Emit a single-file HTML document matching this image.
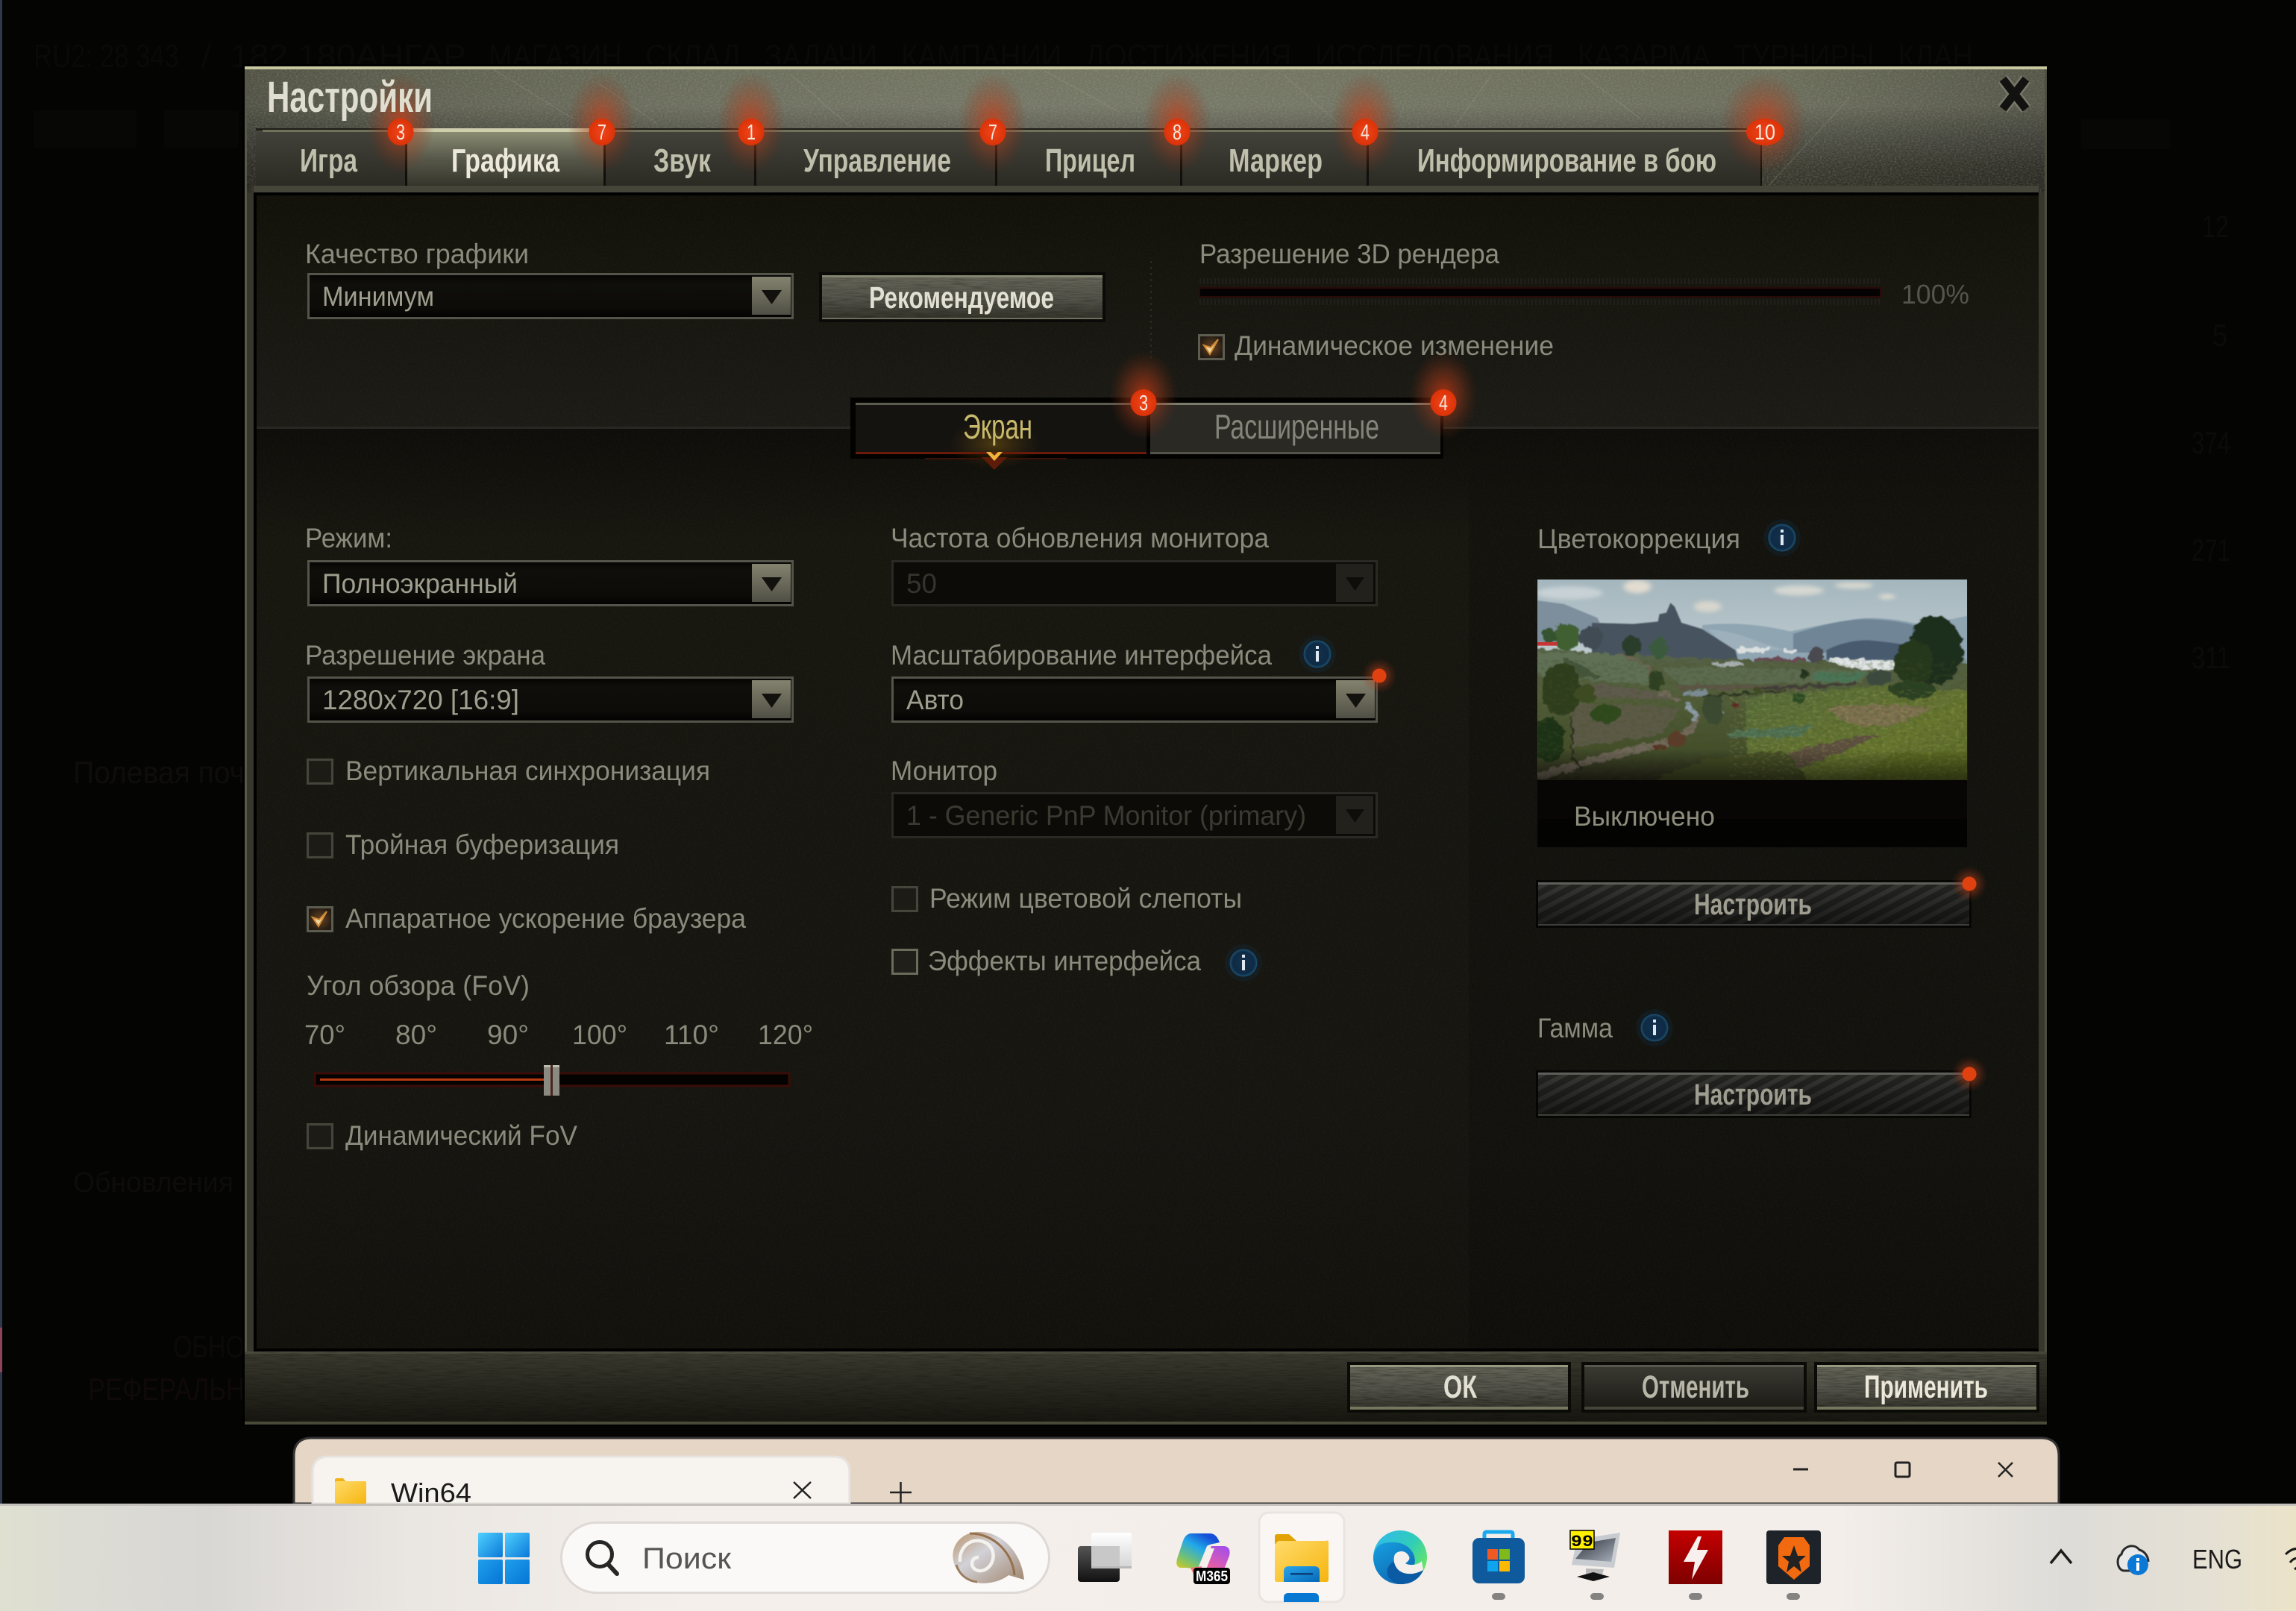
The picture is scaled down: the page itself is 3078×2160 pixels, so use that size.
<!DOCTYPE html>
<html lang="ru"><head><meta charset="utf-8"><title>Настройки</title>
<style>
html,body{margin:0;padding:0;background:#040403;width:3078px;height:2160px;overflow:hidden}
svg{display:block}
text{font-family:"Liberation Sans Narrow","Liberation Sans",sans-serif;white-space:pre}
.l{font-size:37px;fill:#8b8a7c}
.lb{font-size:37px;fill:#a09e8e}
.t{font-size:44px;font-weight:700;fill:#c0bfac}
.b{font-weight:700}
.bd{font-size:29px;fill:#f6e8dc}
.f{font-size:44px;fill:#090908}
</style></head><body>
<svg xmlns="http://www.w3.org/2000/svg" width="3078" height="2160" viewBox="0 0 3078 2160">
<defs>
<linearGradient id="hd" x1="0" y1="0" x2="0" y2="1"><stop offset="0" stop-color="#6e705c"/><stop offset=".3" stop-color="#707260"/><stop offset=".55" stop-color="#54554a"/><stop offset=".8" stop-color="#3e3e33"/><stop offset="1" stop-color="#35352b"/></linearGradient>
<linearGradient id="hs" x1="0" y1="0" x2="1" y2="0"><stop offset="0" stop-color="#000" stop-opacity=".28"/><stop offset=".12" stop-color="#000" stop-opacity=".12"/><stop offset=".55" stop-color="#fff" stop-opacity=".04"/><stop offset=".85" stop-color="#000" stop-opacity=".03"/><stop offset="1" stop-color="#000" stop-opacity=".25"/></linearGradient>
<linearGradient id="tb" x1="0" y1="0" x2="0" y2="1"><stop offset="0" stop-color="#42423a"/><stop offset="1" stop-color="#2b2a23"/></linearGradient>
<linearGradient id="ta" x1="0" y1="0" x2="0" y2="1"><stop offset="0" stop-color="#8b8d73"/><stop offset=".5" stop-color="#58584a"/><stop offset="1" stop-color="#35352b"/></linearGradient>
<linearGradient id="pn" x1="0" y1="0" x2="0" y2="1"><stop offset="0" stop-color="#121109"/><stop offset="1" stop-color="#1c1b16"/></linearGradient>
<linearGradient id="pn2" x1="0" y1="0" x2="0" y2="1"><stop offset="0" stop-color="#0e0d09"/><stop offset=".12" stop-color="#17160f"/><stop offset=".75" stop-color="#161510"/><stop offset="1" stop-color="#12110c"/></linearGradient>
<linearGradient id="rc" x1="0" y1="0" x2="0" y2="1"><stop offset="0" stop-color="#000" stop-opacity="0"/><stop offset=".1" stop-color="#000" stop-opacity=".16"/><stop offset="1" stop-color="#000" stop-opacity=".16"/></linearGradient>
<linearGradient id="bt" x1="0" y1="0" x2="0" y2="1"><stop offset="0" stop-color="#3b3b30"/><stop offset="1" stop-color="#16150f"/></linearGradient>
<linearGradient id="btn" x1="0" y1="0" x2="0" y2="1"><stop offset="0" stop-color="#66665a"/><stop offset=".55" stop-color="#53534a"/><stop offset="1" stop-color="#34332a"/></linearGradient>
<linearGradient id="btd" x1="0" y1="0" x2="0" y2="1"><stop offset="0" stop-color="#3b3a33"/><stop offset="1" stop-color="#1b1a15"/></linearGradient>
<linearGradient id="ar" x1="0" y1="0" x2="0" y2="1"><stop offset="0" stop-color="#84836f"/><stop offset="1" stop-color="#504f45"/></linearGradient>
<linearGradient id="dd" x1="0" y1="0" x2="0" y2="1"><stop offset="0" stop-color="#040302"/><stop offset=".2" stop-color="#0f0e0a"/><stop offset=".75" stop-color="#0d0c08"/><stop offset="1" stop-color="#020201"/></linearGradient>
<radialGradient id="gl"><stop offset="0" stop-color="#d83a12" stop-opacity=".75"/><stop offset=".55" stop-color="#a83c1a" stop-opacity=".36"/><stop offset="1" stop-color="#7a2a12" stop-opacity="0"/></radialGradient>
<radialGradient id="bdg"><stop offset="0" stop-color="#f0451a"/><stop offset="1" stop-color="#dc3208"/></radialGradient>
<radialGradient id="ib"><stop offset="0" stop-color="#15324e"/><stop offset=".78" stop-color="#0e2a44"/><stop offset="1" stop-color="#1d5172"/></radialGradient>
<radialGradient id="ekg"><stop offset="0" stop-color="#7a5a12" stop-opacity=".55"/><stop offset="1" stop-color="#5a3a0a" stop-opacity="0"/></radialGradient>
<pattern id="hatch" width="14" height="14" patternUnits="userSpaceOnUse" patternTransform="rotate(-28)"><rect width="14" height="14" fill="#262623"/><rect width="14" height="6" fill="#3a3a37"/></pattern>
<linearGradient id="hv" x1="0" y1="0" x2="0" y2="1"><stop offset="0" stop-color="#000" stop-opacity=".05"/><stop offset="1" stop-color="#000" stop-opacity=".55"/></linearGradient>
<linearGradient id="tv" x1="0" y1="0" x2="0" y2="1"><stop offset="0" stop-color="#555"/><stop offset="1" stop-color="#111"/></linearGradient>
<linearGradient id="tv2" x1="0" y1="0" x2="0" y2="1"><stop offset="0" stop-color="#fff"/><stop offset="1" stop-color="#d4d4d4"/></linearGradient>
<radialGradient id="chk"><stop offset="0" stop-color="#6a4420"/><stop offset="1" stop-color="#241c14"/></radialGradient>
<linearGradient id="tk" x1="0" y1="0" x2="1" y2="0"><stop offset="0" stop-color="#dfe0cf"/><stop offset=".03" stop-color="#dcdcd4"/><stop offset=".09" stop-color="#d9d7d4"/><stop offset=".18" stop-color="#eae6e2"/><stop offset=".3" stop-color="#f4efea"/><stop offset=".8" stop-color="#f3eee9"/><stop offset=".9" stop-color="#dedcd8"/><stop offset=".96" stop-color="#e4e0d4"/><stop offset="1" stop-color="#ebe3c8"/></linearGradient>
<linearGradient id="win" x1="0" y1="0" x2="1" y2="1"><stop offset="0" stop-color="#4fd0ff"/><stop offset="1" stop-color="#0a78d8"/></linearGradient>
<linearGradient id="win2" x1="0" y1="0" x2="1" y2="1"><stop offset="0" stop-color="#1f9fec"/><stop offset="1" stop-color="#0575d6"/></linearGradient>
<linearGradient id="fo" x1="0" y1="0" x2="1" y2="1"><stop offset="0" stop-color="#ffdb6a"/><stop offset="1" stop-color="#f6b50f"/></linearGradient>
<linearGradient id="fd" x1="0" y1="0" x2="1" y2="1"><stop offset="0" stop-color="#2aa6ea"/><stop offset="1" stop-color="#0568b8"/></linearGradient>
<linearGradient id="cp1" x1="0" y1="1" x2=".6" y2="0"><stop offset="0" stop-color="#ffc800"/><stop offset=".35" stop-color="#7cc36a"/><stop offset=".7" stop-color="#22a9e8"/><stop offset="1" stop-color="#1650d8"/></linearGradient>
<linearGradient id="cp2" x1=".2" y1="1" x2=".8" y2="0"><stop offset="0" stop-color="#ff8c52"/><stop offset=".45" stop-color="#e85ea4"/><stop offset="1" stop-color="#a64fe8"/></linearGradient>
<linearGradient id="e1" x1="0" y1="0" x2="1" y2=".7"><stop offset="0" stop-color="#2fb8f0"/><stop offset=".6" stop-color="#30cdb8"/><stop offset="1" stop-color="#6de85c"/></linearGradient>
<linearGradient id="e2" x1="0" y1="0" x2=".7" y2="1"><stop offset="0" stop-color="#18a0e0"/><stop offset="1" stop-color="#0b62b0"/></linearGradient>
<linearGradient id="rd" x1="0" y1="0" x2="0" y2="1"><stop offset="0" stop-color="#c40000"/><stop offset="1" stop-color="#7e0000"/></linearGradient>
<linearGradient id="mn" x1="0" y1="0" x2="1" y2="1"><stop offset="0" stop-color="#2c3038"/><stop offset="1" stop-color="#a8b0bc"/></linearGradient>
<linearGradient id="sky" x1="0" y1="0" x2="0" y2="1"><stop offset="0" stop-color="#a4b6bd"/><stop offset=".6" stop-color="#cbd5d8"/><stop offset="1" stop-color="#b0c2cc"/></linearGradient>
<linearGradient id="gr" x1="0" y1="0" x2="0" y2="1"><stop offset="0" stop-color="#566348"/><stop offset=".4" stop-color="#515c38"/><stop offset=".75" stop-color="#434e2a"/><stop offset="1" stop-color="#332f22"/></linearGradient>
<linearGradient id="gr2" x1="0" y1="0" x2="1" y2="1"><stop offset="0" stop-color="#556a3c"/><stop offset=".6" stop-color="#66742e"/><stop offset="1" stop-color="#59662a"/></linearGradient>
<linearGradient id="vig" x1="0" y1="0" x2="0" y2="1"><stop offset="0" stop-color="#000" stop-opacity="0"/><stop offset="1" stop-color="#000" stop-opacity=".55"/></linearGradient>
<linearGradient id="shell" x1="0" y1="0" x2="1" y2="1"><stop offset="0" stop-color="#b8926a"/><stop offset=".4" stop-color="#d2d2d8"/><stop offset="1" stop-color="#a0846c"/></linearGradient>
<filter id="nz" x="0" y="0" width="100%" height="100%"><feTurbulence type="fractalNoise" baseFrequency=".35 .55" numOctaves="2" seed="4"/><feColorMatrix values="0 0 0 0 .5  0 0 0 0 .5  0 0 0 0 .45  0 0 0 1.4 -.55"/></filter>
<filter id="nz2" x="0" y="0" width="100%" height="100%"><feTurbulence type="fractalNoise" baseFrequency=".04 .7" numOctaves="3" seed="8"/><feColorMatrix values="0 0 0 0 0  0 0 0 0 0  0 0 0 0 0  0 0 0 1.6 -.65"/></filter>
<filter id="rough" x="-2%" y="-2%" width="104%" height="104%"><feTurbulence type="fractalNoise" baseFrequency=".035" numOctaves="3" seed="3"/><feDisplacementMap in="SourceGraphic" scale="30" xChannelSelector="R" yChannelSelector="G"/></filter>
<filter id="sp" x="0" y="0" width="100%" height="100%"><feTurbulence type="fractalNoise" baseFrequency=".05 .07" numOctaves="3" seed="11"/><feColorMatrix values="0 0 0 0 .06  0 0 0 0 .08  0 0 0 0 .02  0 0 0 3.4 -1.5"/></filter>
<filter id="sy" x="0" y="0" width="100%" height="100%"><feTurbulence type="fractalNoise" baseFrequency=".06 .09" numOctaves="3" seed="21"/><feColorMatrix values="0 0 0 0 .72  0 0 0 0 .68  0 0 0 0 .22  0 0 0 3.6 -1.8"/></filter>
<filter id="bl"><feGaussianBlur stdDeviation="2"/></filter>
<filter id="bl8"><feGaussianBlur stdDeviation="9"/></filter>
<clipPath id="lc"><rect x="3" y="6" width="1557" height="810"/></clipPath>
<g id="ddn"><rect x="1.5" y="1.5" width="649" height="59" fill="url(#dd)" stroke="#55544a" stroke-width="3"/><rect x="596" y="5" width="52" height="51" fill="url(#ar)"/><path d="M609 23H636L622.500 42Z" fill="#12110d"/></g>
<g id="ddd"><rect x="1.5" y="1.500" width="649" height="59" fill="#0c0b08" stroke="#2a2923" stroke-width="3"/><rect x="596" y="5" width="50" height="51" fill="#22211c"/><path d="M609 23H634L621.500 41Z" fill="#0e0d0a"/></g>
<g id="cb"><rect x="1.500" y="1.500" width="33" height="32" fill="#201f1a" stroke="#46453b" stroke-width="3"/><rect x="4" y="4" width="28" height="27" fill="#1c1b16"/></g>
<g id="cc"><rect x="1.500" y="1.500" width="33" height="32" fill="url(#chk)" stroke="#5d5c50" stroke-width="3"/><path d="M8 15L16 27L27 7L17 18Z" fill="#f0d8a0" stroke="#d08a38" stroke-width="2"/></g>
<g id="inf"><circle r="25" fill="#0f3550" opacity=".25"/><circle r="18.500" fill="url(#ib)"/><rect x="-2" y="-4" width="4" height="14" fill="#dfe9ef"/><rect x="-2" y="-11" width="4" height="4" fill="#dfe9ef"/></g>
<g id="dot"><circle r="24" fill="url(#gl)"/><circle r="9.500" fill="#df4210"/></g>
</defs>

<!-- Background -->
<rect width="3078" height="2160" fill="#040403"/>
<rect x="0" y="0" width="3" height="2016" fill="#30384e"/>
<rect x="0" y="1780" width="3" height="60" fill="#8c4458"/>
<g>
<text class="f" x="45" y="90" textLength="195" lengthAdjust="spacingAndGlyphs">RU2: 28 343</text>
<text class="f" x="270" y="90" textLength="355" lengthAdjust="spacingAndGlyphs">/  182 180АНГАР</text>
<text class="f" x="655" y="90" textLength="1990" lengthAdjust="spacingAndGlyphs">МАГАЗИН   СКЛАД   ЗАДАЧИ   КАМПАНИИ   ДОСТИЖЕНИЯ   ИССЛЕДОВАНИЯ   КАЗАРМА   ТУРНИРЫ   КЛАН</text>
<text x="98" y="1050" font-size="42" fill="#0e0d0b" textLength="230" lengthAdjust="spacingAndGlyphs">Полевая поч</text>
<text x="98" y="1598" font-size="38" fill="#0d0c0a" textLength="215" lengthAdjust="spacingAndGlyphs">Обновления</text>
<text x="232" y="1820" font-size="42" fill="#0b0a08" textLength="96" lengthAdjust="spacingAndGlyphs">ОБНО</text>
<text x="118" y="1877" font-size="42" fill="#0f0908" textLength="210" lengthAdjust="spacingAndGlyphs">РЕФЕРАЛЬН</text>
<text x="2952" y="318" font-size="42" fill="#0b0b09" textLength="36" lengthAdjust="spacingAndGlyphs">12</text>
<text x="2966" y="464" font-size="42" fill="#0b0b09" textLength="20" lengthAdjust="spacingAndGlyphs">5</text>
<text x="2938" y="608" font-size="42" fill="#0b0b09" textLength="52" lengthAdjust="spacingAndGlyphs">374</text>
<text x="2938" y="752" font-size="42" fill="#0b0b09" textLength="52" lengthAdjust="spacingAndGlyphs">271</text>
<text x="2938" y="896" font-size="42" fill="#0b0b09" textLength="52" lengthAdjust="spacingAndGlyphs">311</text>
</g>
<rect x="45" y="148" width="138" height="50" fill="#070706"/><rect x="220" y="148" width="100" height="50" fill="#070706"/>
<rect x="2790" y="160" width="120" height="40" fill="#070706"/>

<!-- Dialog -->
<rect x="325" y="86" width="2421" height="1826" fill="#000"/>
<rect x="328" y="89" width="2416" height="1821" fill="#2e2e25"/>
<rect x="328" y="92" width="2416" height="166" fill="url(#hd)"/>
<rect x="328" y="92" width="2416" height="166" fill="url(#hs)"/>
<rect x="328" y="92" width="2416" height="166" filter="url(#nz)" opacity=".35"/>
<g stroke="#a8aa90" stroke-width="1.500" opacity=".2" fill="none">
<path d="M660 92L770 160M800 110L880 165M1060 100L1140 170M1400 95L1500 150M2000 100L1950 170M2480 130L2370 250M2120 98L2200 160M1720 100L1800 170"/>
</g>
<rect x="328" y="89" width="2416" height="4" fill="#c8c8a0"/>
<!-- side frames -->
<rect x="328" y="258" width="12" height="1558" fill="#37372c"/>
<rect x="2733" y="258" width="11" height="1558" fill="#37372c"/>
<rect x="328" y="93" width="3" height="1817" fill="#58584a"/>
<rect x="2741" y="93" width="3" height="1817" fill="#4e4e40"/>

<!-- close X -->
<path d="M2685 106L2716 146M2716 106L2685 146" stroke="#77776a" stroke-width="16"/>
<path d="M2685 106L2716 146M2716 106L2685 146" stroke="#121210" stroke-width="11"/>

<!-- Tabs -->
<rect x="343" y="172" width="2018" height="3" fill="#1e1e18"/>
<path d="M343 249V184Q343 176 352 176H2361V249Z" fill="url(#tb)"/>
<rect x="544" y="176" width="266" height="73" fill="url(#ta)"/>
<rect x="352" y="174" width="2009" height="3" fill="#72725c"/>
<rect x="545" y="172" width="262" height="5" fill="#cfcfae"/>
<g fill="#100f0b"><rect x="543" y="176" width="3" height="73"/><rect x="809" y="176" width="3" height="73"/><rect x="1011" y="176" width="3" height="73"/><rect x="1334" y="176" width="3" height="73"/><rect x="1582" y="176" width="3" height="73"/><rect x="1832" y="176" width="3" height="73"/><rect x="2360" y="176" width="2" height="73"/></g>
<rect x="340" y="249" width="2393" height="9" fill="#45453a"/>

<!-- Panel -->
<rect x="340" y="258" width="2393" height="1554" fill="#000"/>
<rect x="344" y="262" width="2389" height="313" fill="url(#pn)"/>
<rect x="344" y="575" width="2389" height="1233" fill="url(#pn2)"/>
<rect x="1969" y="600" width="764" height="1208" fill="url(#rc)"/>
<rect x="344" y="262" width="2389" height="1546" filter="url(#nz)" opacity=".05"/>
<rect x="344" y="572" width="796" height="3" fill="#282722"/><rect x="1935" y="572" width="798" height="3" fill="#282722"/>
<path d="M1543 350V480" stroke="#2a2922" stroke-width="2" stroke-dasharray="3 5"/>

<!-- Glows tabs -->
<g fill="url(#gl)">
<ellipse cx="537" cy="165" rx="46" ry="68"/><ellipse cx="807" cy="165" rx="46" ry="68"/><ellipse cx="1007" cy="165" rx="46" ry="68"/><ellipse cx="1331" cy="165" rx="46" ry="68"/><ellipse cx="1578" cy="165" rx="46" ry="68"/><ellipse cx="1830" cy="165" rx="46" ry="68"/><ellipse cx="2365" cy="165" rx="58" ry="68"/>
</g>
<text x="358" y="150" font-size="58" font-weight="700" fill="#dfded0" textLength="222" lengthAdjust="spacingAndGlyphs">Настройки</text>
<text class="t" x="402" y="230" textLength="77" lengthAdjust="spacingAndGlyphs">Игра</text>
<text class="t" x="605" y="230" textLength="145" lengthAdjust="spacingAndGlyphs" style="fill:#ece9da">Графика</text>
<text class="t" x="876" y="230" textLength="77" lengthAdjust="spacingAndGlyphs">Звук</text>
<text class="t" x="1077" y="230" textLength="198" lengthAdjust="spacingAndGlyphs">Управление</text>
<text class="t" x="1401" y="230" textLength="121" lengthAdjust="spacingAndGlyphs">Прицел</text>
<text class="t" x="1647" y="230" textLength="126" lengthAdjust="spacingAndGlyphs">Маркер</text>
<text class="t" x="1900" y="230" textLength="401" lengthAdjust="spacingAndGlyphs">Информирование в бою</text>
<g fill="url(#bdg)">
<ellipse cx="537" cy="177" rx="17.500" ry="18"/><ellipse cx="807" cy="177" rx="17.500" ry="18"/><ellipse cx="1007" cy="177" rx="17.500" ry="18"/><ellipse cx="1331" cy="177" rx="17.500" ry="18"/><ellipse cx="1578" cy="177" rx="17.500" ry="18"/><ellipse cx="1830" cy="177" rx="17.500" ry="18"/><ellipse cx="2366" cy="177" rx="25" ry="18"/>
</g>
<g class="bd">
<text class="bd" x="531" y="187" textLength="12" lengthAdjust="spacingAndGlyphs">3</text>
<text class="bd" x="801" y="187" textLength="12" lengthAdjust="spacingAndGlyphs">7</text>
<text class="bd" x="1001" y="187" textLength="12" lengthAdjust="spacingAndGlyphs">1</text>
<text class="bd" x="1325" y="187" textLength="12" lengthAdjust="spacingAndGlyphs">7</text>
<text class="bd" x="1572" y="187" textLength="12" lengthAdjust="spacingAndGlyphs">8</text>
<text class="bd" x="1824" y="187" textLength="12" lengthAdjust="spacingAndGlyphs">4</text>
<text class="bd" x="2352" y="187" textLength="28" lengthAdjust="spacingAndGlyphs">10</text>
</g>

<!-- Top row -->
<text class="l" x="409" y="353" textLength="300" lengthAdjust="spacingAndGlyphs">Качество графики</text>
<use href="#ddn" x="412" y="366"/>
<text class="lb" x="432" y="410" textLength="150" lengthAdjust="spacingAndGlyphs">Минимум</text>
<rect x="1098" y="365" width="384" height="67" fill="#0a0a08"/>
<rect x="1102" y="369" width="376" height="59" fill="url(#btn)"/>
<rect x="1102" y="369" width="376" height="59" filter="url(#nz2)" opacity=".35"/>
<rect x="1102" y="369" width="376" height="3" fill="#84846f"/><rect x="1102" y="426" width="376" height="2" fill="#6e6e5c"/>
<text x="1165" y="413" font-size="41" font-weight="700" fill="#e2e0d2" textLength="248" lengthAdjust="spacingAndGlyphs">Рекомендуемое</text>

<text class="l" x="1608" y="353" textLength="402" lengthAdjust="spacingAndGlyphs">Разрешение 3D рендера</text>
<path d="M1608 377H2521M1608 405H2521" stroke="#201f1a" stroke-width="8" stroke-dasharray="2 3"/>
<rect x="1608" y="386" width="913" height="12" fill="#040202" stroke="#2a0a08" stroke-width="2"/>
<text x="2549" y="407" font-size="36" fill="#55544a" textLength="91" lengthAdjust="spacingAndGlyphs">100%</text>
<use href="#cc" x="1606" y="448"/>
<text class="l" x="1655" y="476" textLength="428" lengthAdjust="spacingAndGlyphs">Динамическое изменение</text>

<!-- Sub tabs -->
<rect x="1140" y="533" width="795" height="82" fill="#020201"/>
<rect x="1147" y="541" width="390" height="68" fill="#141310"/>
<ellipse cx="1333" cy="595" rx="62" ry="34" fill="url(#ekg)"/>
<rect x="1542" y="541" width="389" height="68" fill="#2a2924"/>
<rect x="1147" y="540" width="390" height="3" fill="#5c5b50"/><rect x="1542" y="540" width="389" height="3" fill="#7c7b6e"/>
<rect x="1542" y="606" width="389" height="3" fill="#55544a"/>
<rect x="1147" y="606" width="390" height="3" fill="#6a1a08"/>
<rect x="1240" y="614" width="190" height="2" fill="#3a1208"/>
<path d="M1316 613H1350L1333 630Z" fill="#5c1c08"/><path d="M1322 606H1344L1333 618Z" fill="#f0b43c"/><path d="M1328 606H1338L1333 611Z" fill="#5a2a08"/>
<text x="1291" y="588" font-size="46" fill="#c8ba6c" textLength="93" lengthAdjust="spacingAndGlyphs">Экран</text>
<text x="1628" y="588" font-size="46" fill="#85847a" textLength="221" lengthAdjust="spacingAndGlyphs">Расширенные</text>
<g fill="url(#gl)"><ellipse cx="1533" cy="530" rx="46" ry="60"/><ellipse cx="1935" cy="530" rx="46" ry="60"/></g>
<g fill="url(#bdg)"><ellipse cx="1533" cy="540" rx="17.500" ry="18"/><ellipse cx="1935" cy="540" rx="17.500" ry="18"/></g>
<text class="bd" x="1527" y="550" textLength="12" lengthAdjust="spacingAndGlyphs">3</text>
<text class="bd" x="1929" y="550" textLength="12" lengthAdjust="spacingAndGlyphs">4</text>

<!-- Left column -->
<text class="l" x="409" y="734" textLength="117" lengthAdjust="spacingAndGlyphs">Режим:</text>
<use href="#ddn" x="412" y="751"/>
<text class="lb" x="432" y="795" textLength="262" lengthAdjust="spacingAndGlyphs">Полноэкранный</text>
<text class="l" x="409" y="891" textLength="322" lengthAdjust="spacingAndGlyphs">Разрешение экрана</text>
<use href="#ddn" x="412" y="907"/>
<text class="lb" x="432" y="951" textLength="264" lengthAdjust="spacingAndGlyphs">1280x720 [16:9]</text>
<use href="#cb" x="411" y="1017"/>
<text class="l" x="463" y="1046" textLength="489" lengthAdjust="spacingAndGlyphs">Вертикальная синхронизация</text>
<use href="#cb" x="411" y="1116"/>
<text class="l" x="463" y="1145" textLength="367" lengthAdjust="spacingAndGlyphs">Тройная буферизация</text>
<use href="#cc" x="411" y="1215"/>
<text class="l" x="463" y="1244" textLength="537" lengthAdjust="spacingAndGlyphs">Аппаратное ускорение браузера</text>
<text class="l" x="411" y="1334" textLength="299" lengthAdjust="spacingAndGlyphs">Угол обзора (FoV)</text>
<text class="l" x="408" y="1400" textLength="55" lengthAdjust="spacingAndGlyphs">70°</text>
<text class="l" x="530" y="1400" textLength="56" lengthAdjust="spacingAndGlyphs">80°</text>
<text class="l" x="653" y="1400" textLength="56" lengthAdjust="spacingAndGlyphs">90°</text>
<text class="l" x="767" y="1400" textLength="74" lengthAdjust="spacingAndGlyphs">100°</text>
<text class="l" x="890" y="1400" textLength="74" lengthAdjust="spacingAndGlyphs">110°</text>
<text class="l" x="1016" y="1400" textLength="74" lengthAdjust="spacingAndGlyphs">120°</text>
<rect x="422" y="1439" width="636" height="17" fill="#050302" stroke="#3a0c08" stroke-width="3"/>
<rect x="429" y="1446" width="302" height="3" fill="#b83a10"/>
<rect x="729" y="1428" width="21" height="41" fill="#8b8a80"/>
<rect x="729" y="1428" width="21" height="3" fill="#bdbcb0"/>
<rect x="738" y="1428" width="3" height="41" fill="#4a2622"/>
<use href="#cb" x="411" y="1506"/>
<text class="l" x="463" y="1535" textLength="311" lengthAdjust="spacingAndGlyphs">Динамический FoV</text>

<!-- Middle column -->
<text class="l" x="1194" y="734" textLength="507" lengthAdjust="spacingAndGlyphs">Частота обновления монитора</text>
<use href="#ddd" x="1195" y="751"/>
<text x="1215" y="795" font-size="37" fill="#35342c" textLength="41" lengthAdjust="spacingAndGlyphs">50</text>
<text class="l" x="1194" y="891" textLength="511" lengthAdjust="spacingAndGlyphs">Масштабирование интерфейса</text>
<use href="#inf" x="1766" y="877"/>
<use href="#ddn" x="1195" y="907"/>
<text class="lb" x="1215" y="951" textLength="77" lengthAdjust="spacingAndGlyphs">Авто</text>
<use href="#dot" x="1849" y="906"/>
<text class="l" x="1194" y="1046" textLength="143" lengthAdjust="spacingAndGlyphs">Монитор</text>
<use href="#ddd" x="1195" y="1062"/>
<text x="1215" y="1106" font-size="37" fill="#3b3a31" textLength="536" lengthAdjust="spacingAndGlyphs">1 - Generic PnP Monitor (primary)</text>
<use href="#cb" x="1195" y="1188"/>
<text class="l" x="1246" y="1217" textLength="419" lengthAdjust="spacingAndGlyphs">Режим цветовой слепоты</text>
<g transform="translate(1195,1272)"><rect x="1.500" y="1.500" width="33" height="32" fill="#201f1a" stroke="#6c6b5c" stroke-width="3"/></g>
<text class="l" x="1244" y="1301" textLength="366" lengthAdjust="spacingAndGlyphs">Эффекты интерфейса</text>
<use href="#inf" x="1667" y="1291"/>

<!-- Right column -->
<text class="l" x="2061" y="735" textLength="272" lengthAdjust="spacingAndGlyphs">Цветокоррекция</text>
<use href="#inf" x="2389" y="721"/>

<g transform="translate(2060,775) scale(.36990,.33333)">
<g clip-path="url(#lc)">
<rect width="1568" height="816" fill="url(#sky)"/>
<g filter="url(#bl8)">
<ellipse cx="365" cy="35" rx="50" ry="26" fill="#e2dcd0"/><ellipse cx="620" cy="115" rx="50" ry="22" fill="#d8d6cc"/><ellipse cx="950" cy="50" rx="90" ry="20" fill="#d6d8d2"/><ellipse cx="1150" cy="30" rx="70" ry="12" fill="#dadad0"/><ellipse cx="1270" cy="75" rx="30" ry="9" fill="#e4e0d4"/><ellipse cx="120" cy="60" rx="120" ry="26" fill="#c8d2d6"/>
</g>
<g filter="url(#bl)">
<path d="M0 90L100 105L220 160L260 250L0 260Z" fill="#7d8f9d"/>
<path d="M600 190Q750 170 920 215Q1100 170 1200 160Q1300 160 1400 190L1568 150V360H600Z" fill="#8fa5b2"/>
<path d="M930 225Q1080 170 1180 165Q1300 165 1385 195V300H930Z" fill="#6f8596"/>
<path d="M1050 290Q1120 250 1200 250Q1300 260 1340 270V330H1050Z" fill="#465a6e"/>
<path d="M620 205Q720 215 800 255L900 290H700Z" fill="#9db0bb"/>
<path d="M200 180L350 185L440 175L445 145L470 140L485 100L500 115L525 180L600 205L720 290L730 330H200Z" fill="#47525e"/>
<g filter="url(#rough)">
<path d="M-20 280L200 300L720 330L1590 340V830H-20Z" fill="url(#gr)"/>
<path d="M-20 300L300 305L400 360L420 430L-20 390Z" fill="#5f6f54"/>
<path d="M95 310L240 400H100Z" fill="#45553a"/>
<path d="M450 360L1200 370L1180 420L520 430Z" fill="#5c6b50"/>
<path d="M1000 380H1190L1170 415H1000Z" fill="#4c7558"/>
<path d="M190 420L500 470L520 490L200 480Z" fill="#5e5a4e"/>
<path d="M500 430H1000L980 450H520Z" fill="#5d5546"/>
<path d="M130 500L520 520L450 630L130 680Z" fill="#5c5a46"/>
<path d="M760 480L1300 430L1590 460V830H760Z" fill="url(#gr2)"/>
<path d="M1050 520Q1200 500 1450 520L1300 590Q1150 610 1100 570Z" fill="#7c7050"/>
<path d="M900 710Q1050 650 1250 630L1100 700L880 790Z" fill="#5d5040"/>
<path d="M690 620L1000 590L960 640H700Z" fill="#4f6f52"/>
<path d="M400 830Q600 700 900 700L1000 830Z" fill="#465028"/>
<path d="M1300 700H1590V830H1100Z" fill="#5b6a22"/>
<path d="M0 800Q200 730 400 680Q570 640 580 560" stroke="#71675a" stroke-width="30" fill="none"/>
<path d="M300 305Q390 330 415 385" stroke="#6f6552" stroke-width="7" fill="none"/>
<path d="M440 460Q500 470 520 500" stroke="#726a5c" stroke-width="18" fill="none"/>
<path d="M535 465L620 460" stroke="#7c8c94" stroke-width="14"/>
<path d="M540 515Q585 530 570 575" stroke="#8c9ca4" stroke-width="22" fill="none"/>
<path d="M660 490L670 550" stroke="#8c9ca4" stroke-width="20"/>
<path d="M600 475L900 455" stroke="#2c3420" stroke-width="10"/>
<path d="M800 445L1150 425" stroke="#403e38" stroke-width="12"/>
<path d="M730 280H840V298H730ZM900 288H945V303H900Z" fill="#dadfdf"/>
<path d="M1060 322L1300 335V368H1180L1060 335Z" fill="#dfe4e4"/>
<ellipse cx="1015" cy="310" rx="28" ry="32" fill="#4a4a50"/>
<path d="M640 340H750V355H640Z" fill="#a8b0b0"/>
<path d="M780 320H980V335H780Z" fill="#6a4a55"/>
<ellipse cx="110" cy="238" rx="50" ry="55" fill="#3f6030"/><ellipse cx="45" cy="232" rx="25" ry="30" fill="#35532e"/><ellipse cx="200" cy="240" rx="42" ry="45" fill="#414c52"/><ellipse cx="345" cy="272" rx="36" ry="42" fill="#2c3c2c"/><ellipse cx="445" cy="282" rx="32" ry="42" fill="#3a5a3c"/>
<ellipse cx="90" cy="450" rx="72" ry="105" fill="#2d3d1c"/><ellipse cx="175" cy="465" rx="40" ry="35" fill="#3c4c24"/>
<ellipse cx="250" cy="545" rx="55" ry="38" fill="#2f4a1c"/><ellipse cx="40" cy="650" rx="65" ry="90" fill="#1f3015"/>
<path d="M128 560V720L165 770" stroke="#2a2a1c" stroke-width="8" fill="none"/>
<ellipse cx="505" cy="650" rx="35" ry="28" fill="#5b3b2a"/><ellipse cx="442" cy="678" rx="22" ry="14" fill="#5a3020"/><ellipse cx="720" cy="513" rx="16" ry="12" fill="#5a2a20"/>
<ellipse cx="1445" cy="290" rx="100" ry="140" fill="#1f2e1a"/><ellipse cx="1365" cy="340" rx="70" ry="90" fill="#27381f"/><ellipse cx="1360" cy="450" rx="84" ry="36" fill="#2c4020"/><ellipse cx="1240" cy="400" rx="46" ry="30" fill="#3b4a40"/>
<ellipse cx="800" cy="455" rx="18" ry="15" fill="#3c4a22"/><ellipse cx="950" cy="484" rx="22" ry="20" fill="#2c4a22"/><ellipse cx="435" cy="410" rx="28" ry="38" fill="#2e4022"/><ellipse cx="640" cy="530" rx="38" ry="60" fill="#3a4a30"/><ellipse cx="970" cy="385" rx="14" ry="20" fill="#20321f"/>
</g>
</g>
<rect x="0" y="258" width="75" height="14" fill="#c63434"/>
<rect x="0" y="330" width="1568" height="486" filter="url(#sp)" opacity=".28"/>
<rect x="700" y="450" width="868" height="366" filter="url(#sy)" opacity=".14"/>
<rect x="0" y="690" width="1568" height="126" fill="url(#vig)"/>
</g></g>
<rect x="2061" y="1046" width="576" height="90" fill="#070604"/>
<rect x="2061" y="1098" width="576" height="38" fill="#030302"/>
<text x="2110" y="1107" font-size="37" fill="#8e8c7c" textLength="189" lengthAdjust="spacingAndGlyphs">Выключено</text>

<rect x="2059" y="1180" width="584" height="64" fill="#060605"/>
<rect x="2062" y="1183" width="578" height="58" fill="url(#hatch)"/>
<rect x="2062" y="1183" width="578" height="58" fill="url(#hv)"/>
<rect x="2062" y="1183" width="578" height="3" fill="#5e5e5a"/><rect x="2062" y="1239" width="578" height="2" fill="#3e3e3a"/>
<text x="2271" y="1226" font-size="40" font-weight="700" fill="#9f9d90" textLength="158" lengthAdjust="spacingAndGlyphs">Настроить</text>
<use href="#dot" x="2640" y="1185"/>
<text class="l" x="2061" y="1391" textLength="101" lengthAdjust="spacingAndGlyphs">Гамма</text>
<use href="#inf" x="2218" y="1378"/>
<rect x="2059" y="1435" width="584" height="64" fill="#060605"/>
<rect x="2062" y="1438" width="578" height="58" fill="url(#hatch)"/>
<rect x="2062" y="1438" width="578" height="58" fill="url(#hv)"/>
<rect x="2062" y="1438" width="578" height="3" fill="#5e5e5a"/><rect x="2062" y="1494" width="578" height="2" fill="#3e3e3a"/>
<text x="2271" y="1481" font-size="40" font-weight="700" fill="#9f9d90" textLength="158" lengthAdjust="spacingAndGlyphs">Настроить</text>
<use href="#dot" x="2640" y="1440"/>

<!-- Bottom bar -->
<rect x="340" y="1808" width="2393" height="4" fill="#000"/>
<rect x="328" y="1812" width="2416" height="98" fill="url(#bt)"/>
<rect x="328" y="1812" width="2416" height="3" fill="#4a4a3c"/>
<rect x="328" y="1812" width="2416" height="98" filter="url(#nz2)" opacity=".3"/>
<rect x="328" y="1906" width="2416" height="4" fill="#4a4a38"/>

<rect x="1806" y="1826" width="300" height="68" fill="#0a0a07"/>
<rect x="1810" y="1830" width="292" height="60" fill="url(#btn)"/><rect x="1810" y="1830" width="292" height="60" filter="url(#nz2)" opacity=".45"/><rect x="1810" y="1830" width="292" height="3" fill="#989880"/><rect x="1810" y="1886" width="292" height="4" fill="#77775f"/>
<text x="1935" y="1874" font-size="43" font-weight="700" fill="#e2e0d2" textLength="45" lengthAdjust="spacingAndGlyphs">ОК</text>
<rect x="2120" y="1826" width="302" height="68" fill="#0a0a07"/>
<rect x="2124" y="1830" width="294" height="60" fill="url(#btd)"/><rect x="2124" y="1830" width="294" height="3" fill="#58584c"/><rect x="2124" y="1886" width="294" height="4" fill="#45453a"/>
<text x="2201" y="1874" font-size="43" font-weight="700" fill="#b8b6a8" textLength="144" lengthAdjust="spacingAndGlyphs">Отменить</text>
<rect x="2432" y="1826" width="302" height="68" fill="#0a0a07"/>
<rect x="2436" y="1830" width="294" height="60" fill="url(#btn)"/><rect x="2436" y="1830" width="294" height="60" filter="url(#nz2)" opacity=".45"/><rect x="2436" y="1830" width="294" height="3" fill="#989880"/><rect x="2436" y="1886" width="294" height="4" fill="#77775f"/>
<text x="2499" y="1874" font-size="43" font-weight="700" fill="#ece9da" textLength="166" lengthAdjust="spacingAndGlyphs">Применить</text>

<!-- Explorer window -->
<path d="M394 2016V1952Q394 1928 418 1928H2736Q2760 1928 2760 1952V2016Z" fill="#e6d6c6" stroke="#333" stroke-width="3"/>
<path d="M419 2016V1974Q419 1953 440 1953H1118Q1139 1953 1139 1974V2016Z" fill="#f7f3ef" stroke="#e6e2dd" stroke-width="3"/>
<path d="M449 1984Q449 1982 452 1982H460L465 1988H449Z" fill="#f2b21a"/><rect x="449" y="1986" width="42" height="30" rx="2" fill="url(#fo)"/>
<text x="524" y="2014" font-size="36" fill="#1a1a1a" style="font-family:'Liberation Sans',sans-serif" textLength="108" lengthAdjust="spacingAndGlyphs">Win64</text>
<path d="M1064 1987L1087 2009M1087 1987L1064 2009" stroke="#222" stroke-width="2.500"/>
<path d="M1193 2001H1222M1207.500 1987V2016" stroke="#222" stroke-width="2.500"/>
<path d="M2404 1970H2424" stroke="#222" stroke-width="3"/>
<rect x="2541" y="1961" width="19" height="19" rx="2" fill="none" stroke="#222" stroke-width="3"/>
<path d="M2679 1961L2698 1980M2698 1961L2679 1980" stroke="#222" stroke-width="2.500"/>

<!-- Taskbar -->
<rect x="0" y="2016" width="3078" height="144" fill="url(#tk)"/>
<rect x="0" y="2016" width="3078" height="3" fill="#c4c1bd"/>
<rect x="641" y="2055" width="33" height="33" rx="2" fill="url(#win)"/>
<rect x="677" y="2055" width="33" height="33" rx="2" fill="url(#win)"/>
<rect x="641" y="2091" width="33" height="33" rx="2" fill="url(#win2)"/>
<rect x="677" y="2091" width="33" height="33" rx="2" fill="url(#win2)"/>
<rect x="752.500" y="2041.500" width="654" height="94" rx="47" fill="#fbf9f7" stroke="#ded9d4" stroke-width="3"/>
<circle cx="804" cy="2084" r="16.500" fill="none" stroke="#262626" stroke-width="5"/><path d="M815 2097L827 2110" stroke="#262626" stroke-width="6" stroke-linecap="round"/>
<text x="861" y="2103" font-size="40" fill="#555" style="font-family:'Liberation Sans',sans-serif" textLength="119" lengthAdjust="spacingAndGlyphs">Поиск</text>
<path d="M1278 2092C1274 2068 1294 2052 1316 2054C1346 2056 1370 2084 1373 2118L1352 2112C1340 2122 1316 2126 1302 2120C1288 2114 1280 2104 1278 2092Z" fill="url(#shell)"/>
<path d="M1287 2094C1285 2072 1306 2058 1324 2070C1340 2084 1328 2108 1312 2106C1300 2104 1300 2088 1312 2088" fill="none" stroke="#f4f2ee" stroke-width="4.500"/>
<path d="M1300 2056C1334 2056 1358 2084 1360 2112" fill="none" stroke="#96704c" stroke-width="3"/>
<path d="M1282 2098C1286 2112 1298 2120 1310 2121" fill="none" stroke="#9c7c5e" stroke-width="3"/>

<rect x="1445" y="2073" width="56" height="48" rx="4" fill="url(#tv)"/>
<rect x="1463" y="2055" width="54" height="48" rx="3" fill="url(#tv2)"/><rect x="1463" y="2073" width="38" height="30" fill="#c8c8c8"/><rect x="1463" y="2100" width="54" height="3" fill="#b8b8b8"/>

<!-- Copilot -->
<path d="M1597 2056H1622C1628 2056 1632 2060 1635 2068C1628 2070 1622 2070 1618 2073L1603 2110C1600 2102 1594 2102 1584 2102C1578 2102 1576 2098 1578 2090L1586 2066C1588 2060 1592 2056 1597 2056Z" fill="url(#cp1)"/>
<path d="M1624 2073H1640C1647 2073 1650 2078 1648 2086L1638 2112C1636 2118 1630 2121 1624 2121H1606C1604 2121 1600 2110 1596 2102L1612 2100Z" fill="url(#cp2)"/>
<path d="M1610 2104L1619 2076H1628L1617 2104Z" fill="#f5f0ec"/>
<rect x="1600" y="2102" width="49" height="22" rx="4" fill="#000"/>
<text x="1603" y="2120" font-size="20" font-weight="700" fill="#fff" style="font-family:'Liberation Sans',sans-serif" textLength="43" lengthAdjust="spacingAndGlyphs">M365</text>

<!-- Explorer -->
<rect x="1688" y="2028" width="114" height="120" rx="13" fill="#faf6f3" stroke="#e9e4e0" stroke-width="3"/>
<path d="M1709 2068V2060Q1709 2057 1712 2057H1728L1738 2066V2070H1709Z" fill="#e2a302"/>
<path d="M1709 2073Q1709 2069 1714 2066H1738H1778Q1781 2064 1781 2068V2118Q1781 2121 1778 2121H1712Q1709 2121 1709 2118Z" fill="url(#fo)"/>
<path d="M1721 2121V2107Q1721 2100 1728 2100H1762Q1769 2100 1769 2107V2121Z" fill="url(#fd)"/>
<rect x="1730" y="2109" width="30" height="2.500" fill="#0a3f78"/>
<path d="M1721 2148V2142Q1721 2136 1727 2136H1762Q1768 2136 1768 2142V2148Z" fill="#0878d2"/>

<!-- Edge -->
<circle cx="1877" cy="2088" r="36" fill="url(#e1)"/>
<path d="M1841 2088C1843 2068 1858 2068 1868 2068C1890 2068 1900 2086 1896 2098C1888 2100 1880 2098 1878 2092C1870 2094 1862 2108 1872 2118C1880 2124 1900 2120 1908 2105C1900 2120 1888 2124 1877 2124C1856 2124 1841 2108 1841 2088Z" fill="url(#e2)"/>
<path d="M1868 2094C1854 2102 1858 2120 1876 2124C1892 2125 1904 2116 1908 2105C1898 2110 1880 2112 1872 2100Z" fill="#0b5aa4"/>
<path d="M1869 2087C1870 2080 1880 2078 1885 2082C1892 2088 1890 2092 1884 2096C1890 2100 1902 2098 1906 2093L1908 2105C1894 2113 1877 2112 1871 2100C1869 2096 1868 2092 1869 2087Z" fill="#f5f0ec"/>

<!-- Store -->
<path d="M1990 2069V2057Q1990 2054 1993 2054H2025Q2028 2054 2028 2057V2069" fill="none" stroke="#19a9ee" stroke-width="5"/>
<rect x="1974" y="2062" width="70" height="61" rx="9" fill="#0f5a9c"/>
<rect x="1994" y="2077" width="14" height="14" fill="#ef5a24"/><rect x="2010" y="2077" width="14" height="14" fill="#80ba1a"/>
<rect x="1994" y="2093" width="14" height="14" fill="#0fa4ee"/><rect x="2010" y="2093" width="14" height="14" fill="#ffb900"/>

<!-- Monitor -->
<path d="M2114 2064L2172 2055L2164 2102L2107 2098Z" fill="#c8ccd0"/>
<path d="M2130 2068L2166 2062L2160 2094L2112 2090Z" fill="url(#mn)"/>
<path d="M2126 2103L2150 2104L2148 2111H2126Z" fill="#b8b8b8"/>
<path d="M2114 2114L2136 2108L2158 2114L2136 2120Z" fill="#111"/>
<rect x="2105" y="2052" width="32" height="25" fill="#ffef00" stroke="#000" stroke-width="1.500"/>
<text x="2106" y="2073" font-size="22" font-weight="700" fill="#000" textLength="30" lengthAdjust="spacingAndGlyphs" style="font-family:'Liberation Mono',monospace">99</text>

<!-- Red -->
<rect x="2237" y="2052" width="72" height="72" fill="url(#rd)"/>
<path d="M2276 2060L2257 2094H2272L2268 2118L2290 2078H2275L2281 2060Z" fill="#f8f0ee"/>

<!-- Shield -->
<rect x="2368" y="2052" width="73" height="72" rx="4" fill="#1e2329"/>
<path d="M2392 2061H2418L2426 2072V2100L2405 2118L2384 2100V2072Z" fill="#f26a0f"/>
<path d="M2405 2072L2410 2086H2421L2412 2094L2415 2108L2405 2100L2395 2108L2398 2094L2389 2086H2400Z" fill="#222"/>

<g fill="#858381"><rect x="2000" y="2136" width="18" height="9" rx="4.500"/><rect x="2132" y="2136" width="18" height="9" rx="4.500"/><rect x="2264" y="2136" width="18" height="9" rx="4.500"/><rect x="2395" y="2136" width="18" height="9" rx="4.500"/></g>

<!-- Tray -->
<path d="M2749 2096L2763 2079L2777 2096" fill="none" stroke="#1c1c1c" stroke-width="3.500"/>
<path d="M2856 2106H2848C2838 2106 2836 2088 2844 2084C2846 2074 2860 2068 2868 2078C2876 2080 2880 2088 2880 2094" fill="#e8e8e8" stroke="#2a2a2a" stroke-width="3"/>
<ellipse cx="2866" cy="2098" rx="14" ry="14" fill="#0a78d4"/>
<rect x="2864" y="2095" width="4" height="11" fill="#fff"/><rect x="2864" y="2089" width="4" height="4" fill="#fff"/>
<text x="2939" y="2103" font-size="36" fill="#1a1a1a" style="font-family:'Liberation Sans',sans-serif" textLength="67" lengthAdjust="spacingAndGlyphs">ENG</text>
<path d="M3064 2084Q3078 2070 3092 2082M3070 2095Q3078 2084 3090 2094M3076 2104L3082 2100" fill="none" stroke="#1a1a1a" stroke-width="3"/>
</svg>
</body></html>
